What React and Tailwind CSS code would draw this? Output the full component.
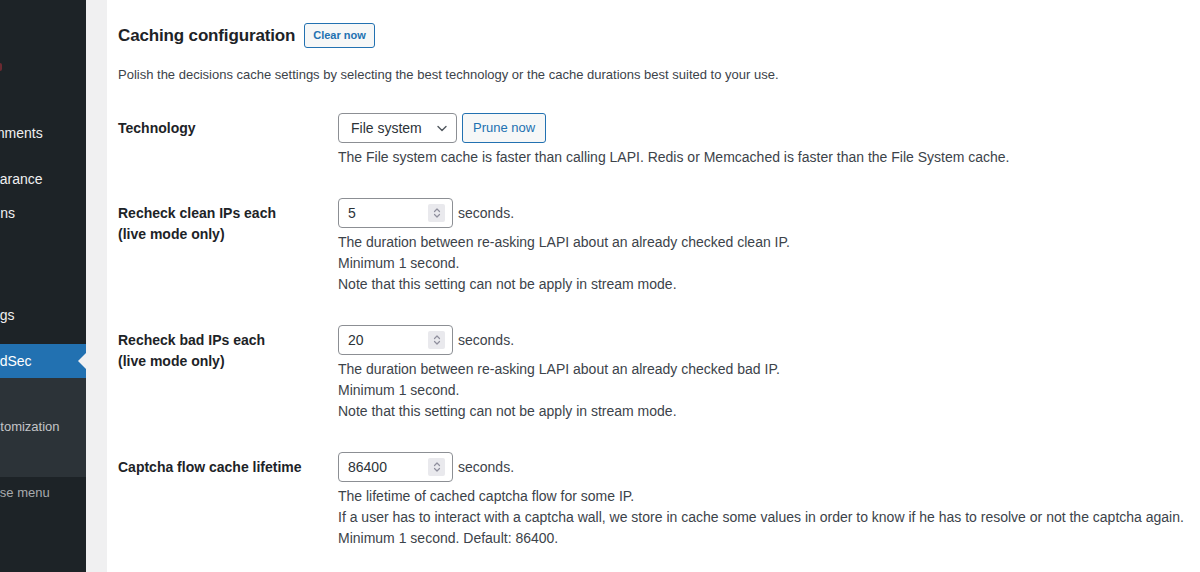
// App.jsx
// WordPress admin – CrowdSec plugin, "Caching configuration" section.
// Left: clipped admin menu. Right: settings form-table.

const MENU = [
  { label: "Comments", shift: "-ml-[25px]" },
  { sep: true },
  { label: "Appearance", shift: "-ml-[33px]" },
  { label: "Plugins", shift: "-ml-[31px]" },
  { label: "Users", shift: "-ml-[60px]" },
  { label: "Tools", shift: "-ml-[60px]" },
  { label: "Settings", shift: "-ml-[36px]" },
  { sep: true },
];

const SUBMENU = [
  { label: "Settings", shift: "-ml-[90px]" },
  { label: "Theme customization", shift: "-ml-[64px]" },
  { label: "Advanced", shift: "-ml-[90px]" },
];

const ROWS = [
  {
    label: ["Recheck clean IPs each", "(live mode only)"],
    value: "5",
    help: [
      "The duration between re-asking LAPI about an already checked clean IP.",
      "Minimum 1 second.",
      "Note that this setting can not be apply in stream mode.",
    ],
  },
  {
    label: ["Recheck bad IPs each", "(live mode only)"],
    value: "20",
    help: [
      "The duration between re-asking LAPI about an already checked bad IP.",
      "Minimum 1 second.",
      "Note that this setting can not be apply in stream mode.",
    ],
  },
  {
    label: ["Captcha flow cache lifetime"],
    value: "86400",
    help: [
      "The lifetime of cached captcha flow for some IP.",
      "If a user has to interact with a captcha wall, we store in cache some values in order to know if he has to resolve or not the captcha again.",
      "Minimum 1 second. Default: 86400.",
    ],
  },
];

function Sidebar() {
  return (
    <aside className="flex w-[86px] shrink-0 flex-col overflow-hidden bg-[#1d2327] text-[14px] text-[#f0f0f1]">
      {/* tail of an update bubble from the items above */}
      <div className="h-[116px] shrink-0 pt-[63px]">
        <div className="h-[8px] w-[2px] rounded-r-full bg-[#6b2a31]" />
      </div>

      {MENU.map((m, i) =>
        m.sep ? (
          <div key={i} className="h-[12px] shrink-0" />
        ) : (
          <div key={m.label} className="flex h-[34px] shrink-0 items-center whitespace-nowrap">
            <span className={m.shift}>{m.label}</span>
          </div>
        )
      )}

      {/* current menu item */}
      <div className="relative flex h-[34px] shrink-0 items-center whitespace-nowrap bg-[#2271b1] text-white">
        <span className="-ml-[33px]">CrowdSec</span>
        <span className="absolute right-0 top-1/2 h-0 w-0 -translate-y-1/2 border-y-[8px] border-r-[8px] border-y-transparent border-r-[#f0f0f1]" />
      </div>

      <div className="flex shrink-0 flex-col bg-[#2c3338] pb-[8px] pt-[7px] text-[13px] text-[#c3c4c7]">
        {SUBMENU.map((s) => (
          <div key={s.label} className="flex h-[28px] items-center whitespace-nowrap">
            <span className={s.shift}>{s.label}</span>
          </div>
        ))}
      </div>

      <div className="flex h-[32px] shrink-0 items-center whitespace-nowrap text-[13px] text-[#a7aaad]">
        <span className="-ml-[37px]">Collapse menu</span>
      </div>
    </aside>
  );
}

function Spinner() {
  return (
    <span className="flex h-[18px] w-[17px] items-center justify-center rounded-[2px] bg-[#e9e9ed]">
      <svg width="10" height="14" viewBox="0 0 10 14" fill="none" stroke="#8f8f9d" strokeWidth="1.2" strokeLinecap="round" strokeLinejoin="round">
        <path d="M2.5 5.5 L5 3 L7.5 5.5" />
        <path d="M2.5 8.5 L5 11 L7.5 8.5" />
      </svg>
    </span>
  );
}

function NumberField({ value }) {
  return (
    <div className="flex items-center gap-[5px]">
      <div className="flex h-[30px] w-[115px] items-center justify-between rounded-[4px] border border-[#8c8f94] bg-white pl-[9px] pr-[7px] text-[14px] text-[#2c3338]">
        <span>{value}</span>
        <Spinner />
      </div>
      <span className="text-[14px] text-[#3c434a]">seconds.</span>
    </div>
  );
}

function Help({ lines }) {
  return (
    <div className="mt-[4px] text-[14px] leading-[21px] text-[#3c434a]">
      {lines.map((l) => (
        <div key={l} className="whitespace-nowrap">{l}</div>
      ))}
    </div>
  );
}

function Row({ label, children }) {
  return (
    <div className="flex">
      <div className="w-[210px] shrink-0 pb-[20px] pt-[20px] pr-[10px] text-[14px] font-bold leading-[21px] text-[#1d2327]">
        {label.map((l) => (
          <div key={l} className="whitespace-nowrap">{l}</div>
        ))}
      </div>
      <div className="min-w-0 flex-1 py-[15px] pl-[10px]">{children}</div>
    </div>
  );
}

export default function App() {
  return (
    <div className="flex h-[572px] w-full overflow-hidden bg-[#f0f0f1] font-['Liberation_Sans',Arial,sans-serif]">
      <Sidebar />

      <div className="w-[21px] shrink-0" />

      <main className="min-w-0 flex-1 overflow-hidden bg-white pl-[11px]">
        {/* ============ Section heading ===================================== */}
        <div className="mt-[23px] flex h-[25px] items-center gap-[9px]">
          <h2 className="text-[17px] font-bold leading-[24px] tracking-[-0.15px] text-[#1d2327]">Caching configuration</h2>
          <button
            type="button"
            className="h-[25px] rounded-[3px] border border-[#2271b1] bg-[#f6f7f7] px-[8px] text-[11px] font-bold text-[#2271b1]"
          >
            Clear now
          </button>
        </div>

        <p className="mt-[17px] text-[13px] leading-[20px] text-[#3c434a]">
          Polish the decisions cache settings by selecting the best technology or the cache durations best suited to your use.
        </p>

        {/* ============ Form table ========================================== */}
        <div className="mt-[13px]">
          <Row label={["Technology"]}>
            <div className="flex items-center gap-[5px]">
              <div className="flex h-[30px] w-[119px] items-center justify-between rounded-[4px] border border-[#8c8f94] bg-white pl-[12px] pr-[7px] text-[14px] text-[#2c3338]">
                <span>File system</span>
                <svg width="14" height="14" viewBox="0 0 14 14" fill="none" stroke="#50575e" strokeWidth="1.4" strokeLinecap="round" strokeLinejoin="round">
                  <path d="M3 5.5 L7 9.5 L11 5.5" />
                </svg>
              </div>
              <button
                type="button"
                className="h-[30px] rounded-[3px] border border-[#2271b1] bg-[#f6f7f7] px-[10px] text-[13px] text-[#2271b1]"
              >
                Prune now
              </button>
            </div>
            <Help lines={["The File system cache is faster than calling LAPI. Redis or Memcached is faster than the File System cache."]} />
          </Row>

          {ROWS.map((r) => (
            <Row key={r.value} label={r.label}>
              <NumberField value={r.value} />
              <Help lines={r.help} />
            </Row>
          ))}
        </div>
      </main>
    </div>
  );
}
